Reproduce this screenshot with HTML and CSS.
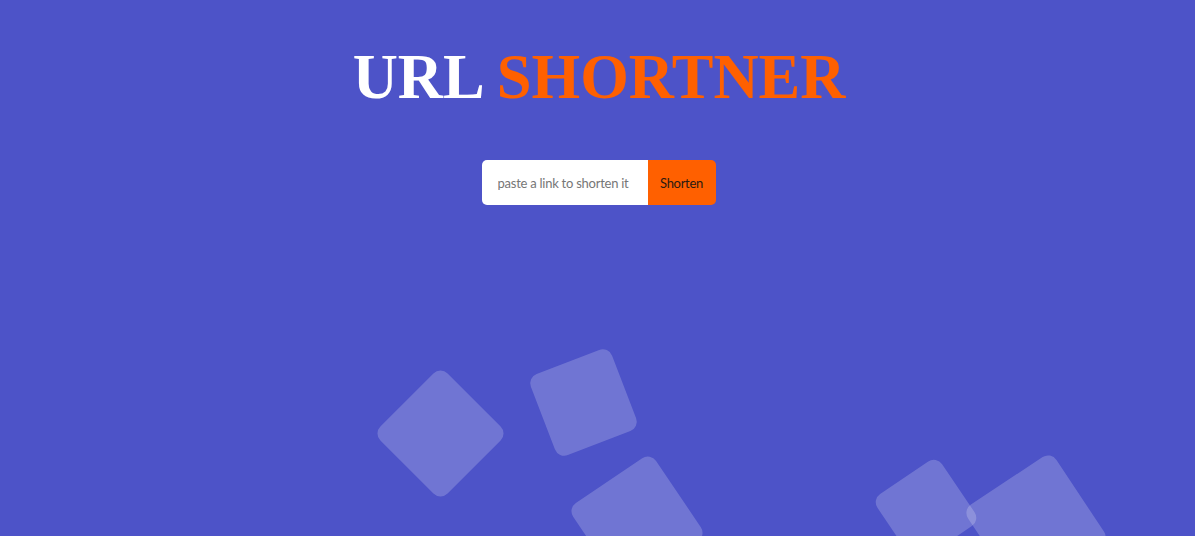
FILE: index.html
```html
<!DOCTYPE html>
<html lang="en">
<head>
<meta charset="utf-8">
<title>URL Shortner</title>
<link rel="stylesheet" href="styles.css">
</head>
<body>
<div class="page">
  <ul class="squares" aria-hidden="true">
    <li class="sq sq1"></li>
    <li class="sq sq2"></li>
    <li class="sq sq3"></li>
    <li class="sq sq4"></li>
    <li class="sq sq5"></li>
  </ul>
  <main class="content">
    <h1 class="title"><span class="title-white">URL</span> <span class="title-orange">SHORTNER</span></h1>
    <form class="shorten-form" onsubmit="return false;">
      <input class="link-input" type="text" placeholder="paste a link to shorten it">
      <button class="shorten-btn" type="submit">Shorten</button>
    </form>
  </main>
</div>
</body>
</html>
```

FILE: styles.css
```css
html, body {
  margin: 0;
  padding: 0;
}

body {
  background: #4d53c8;
  font-family: "Lato", "Noto Sans", sans-serif;
  overflow: hidden;
}

.page {
  position: relative;
  width: 100%;
  height: 536px;
  overflow: hidden;
}

.squares {
  position: absolute;
  inset: 0;
  margin: 0;
  padding: 0;
  list-style: none;
  pointer-events: none;
}

.sq {
  position: absolute;
  background: rgba(255, 255, 255, 0.2);
  border-radius: 10px;
}

.sq1 { width: 95px; height: 95px; left: 393px; top: 386px; transform: rotate(45deg); }
.sq2 { width: 87px; height: 87px; left: 540px; top: 359px; transform: rotate(-21deg); }
.sq3 { width: 100px; height: 100px; left: 587px; top: 472px; transform: rotate(-34deg); }
.sq4 { width: 78px; height: 78px; left: 887px; top: 471px; transform: rotate(-34deg); }
.sq5 { width: 106px; height: 106px; left: 983px; top: 472px; transform: rotate(-33.5deg); }

.content {
  position: relative;
  display: flex;
  flex-direction: column;
  align-items: center;
  padding-top: 42px;
}

.title {
  margin: 0 0 0 3px;
  font-family: "Liberation Serif", "Times New Roman", serif;
  font-weight: bold;
  font-size: 62.5px;
  line-height: 1.15;
}

.title-white { color: #ffffff; }
.title-orange { color: #ff6000; }

.shorten-form {
  display: flex;
  margin-top: 46px;
  margin-left: 2px;
  height: 45px;
  border-radius: 5px;
  overflow: hidden;
}

.link-input {
  width: 166px;
  box-sizing: border-box;
  border: none;
  outline: none;
  padding: 2px 8px 0 16px;
  font-family: inherit;
  font-size: 13px;
  letter-spacing: -0.25px;
  color: #333;
  background: #fff;
}

.link-input::placeholder {
  color: #767676;
}

.shorten-btn {
  width: 68px;
  border: none;
  background: #ff6000;
  color: #2b1a12;
  font-family: inherit;
  font-size: 13px;
  letter-spacing: -0.3px;
  padding: 2px 0 0;
  cursor: pointer;
}
```
